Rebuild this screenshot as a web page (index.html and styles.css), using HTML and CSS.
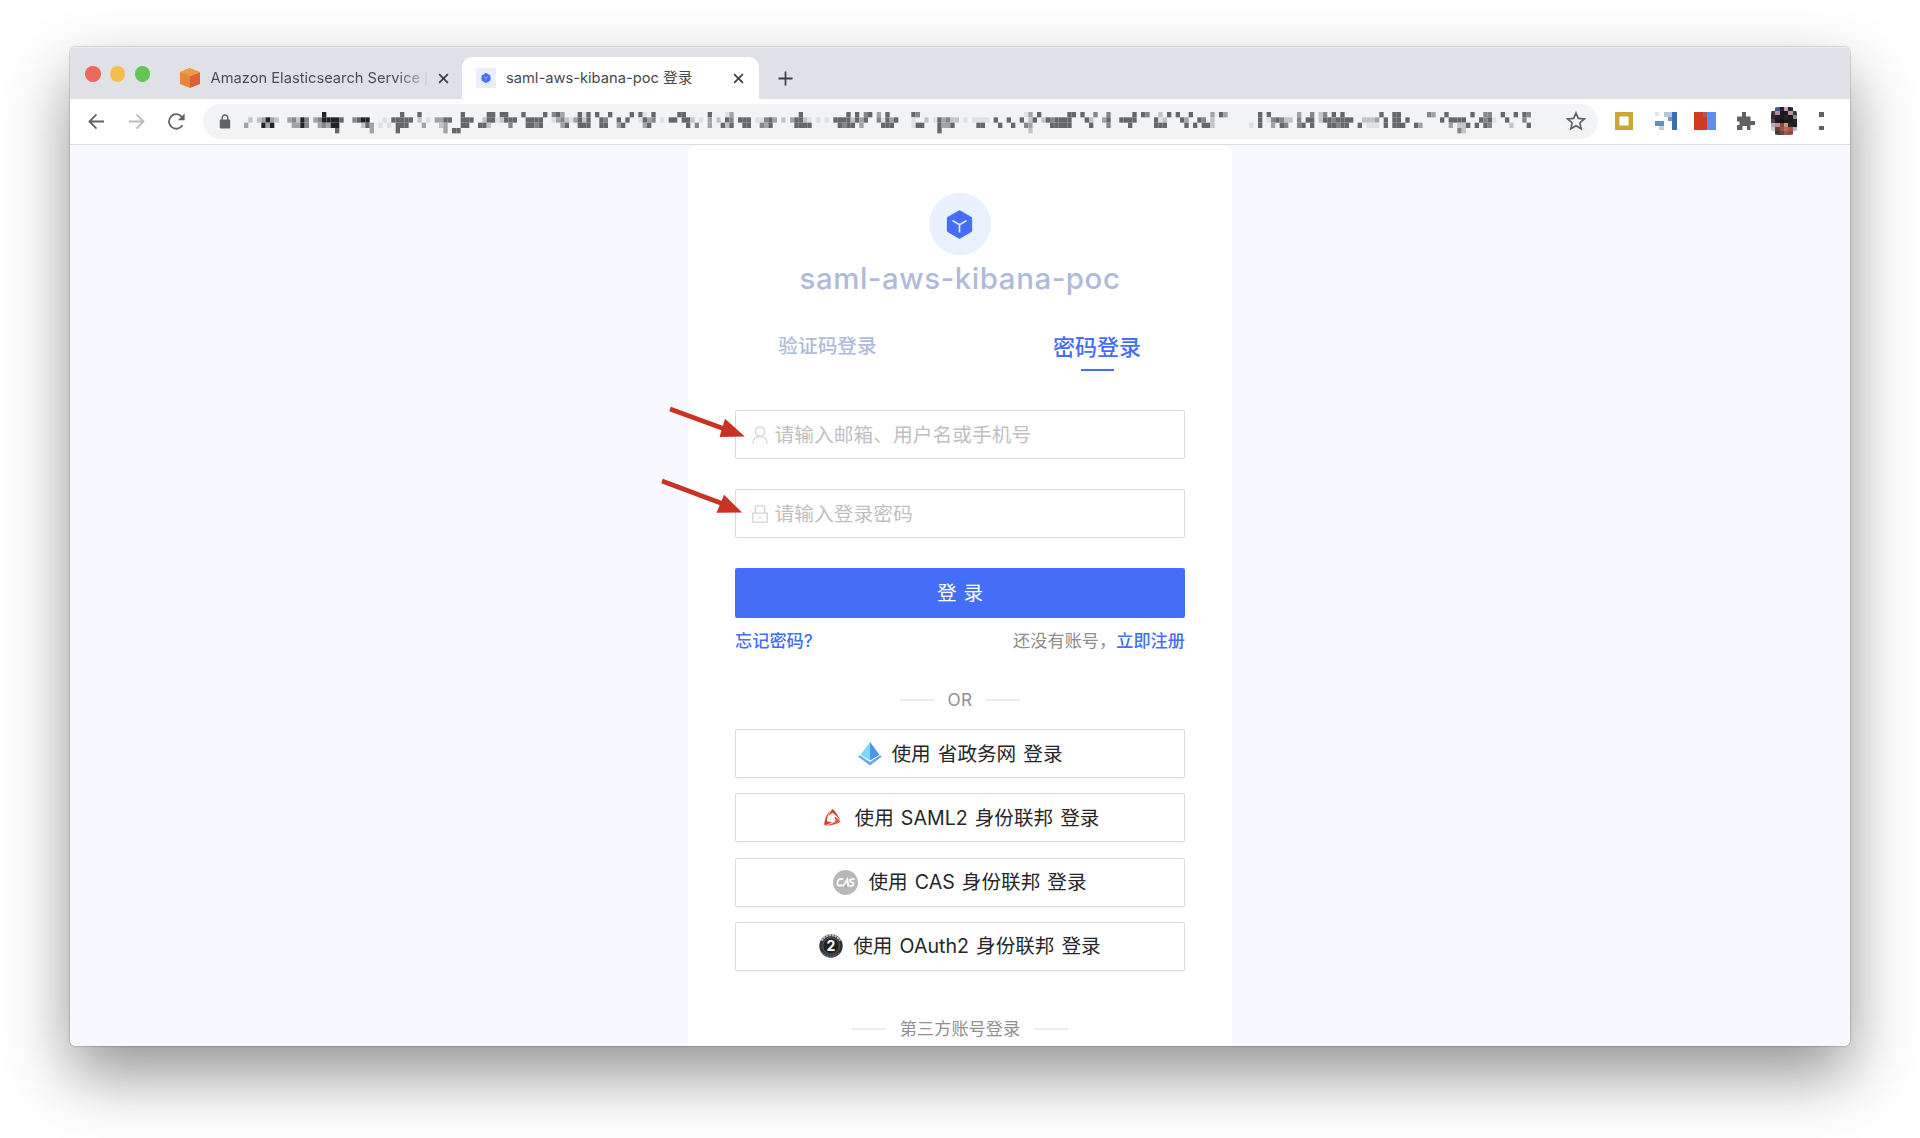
FILE: index.html
```html
<!DOCTYPE html>
<html lang="zh-CN">
<head>
<meta charset="utf-8">
<title>saml-aws-kibana-poc 登录</title>
<link rel="stylesheet" href="styles.css">
</head>
<body>
<div class="window">
  <header class="tabstrip">
    <div class="lights"><i class="red"></i><i class="yellow"></i><i class="green"></i></div>
    <div class="tab">
      <svg class="favicon" viewBox="0 0 20 20"><path d="M0 4 10 0v20L0 16z" fill="#e8873c"/><path d="M10 8l10-4v12l-10 4z" fill="#dc6330"/><path d="M0 4 10 0l10 4-10 4z" fill="#ee9a45"/></svg>
      <span class="tab-title fade">Amazon Elasticsearch Service</span>
      <span class="sliver"></span>
      <svg class="close" viewBox="0 0 12 12"><path d="M1.200 1.200l9.600 9.600M10.800 1.200l-9.600 9.600"/></svg>
    </div>
    <div class="tab active">
      <svg class="favicon" viewBox="0 0 20 20"><path d="M0 0h20v20H0z" fill="#e9effe"/><path d="M10 5.400l4 2.300v4.600l-4 2.300-4-2.300V7.700z" fill="#446ef7" stroke="#446ef7" stroke-linejoin="round"/><path d="M7.800 8.600L10 10l2.200-1.400M10 10v2.600" fill="none" stroke="#9db4fb" stroke-width=".8"/></svg>
      <span class="tab-title">saml-aws-kibana-poc 登录</span>
      <svg class="close" viewBox="0 0 12 12"><path d="M1.200 1.200l9.600 9.600M10.800 1.200l-9.600 9.600"/></svg>
    </div>
    <svg class="plus" viewBox="0 0 16 16"><path d="M8 .5v15M.5 8h15"/></svg>
  </header>

  <div class="toolbar">
    <svg class="nav" viewBox="0 0 18 18"><path d="M17 9H2M9 1.500L1.500 9 9 16.500"/></svg>
    <svg class="nav off" viewBox="0 0 18 18"><path d="M1 9h15M9 1.500L16.500 9 9 16.500"/></svg>
    <svg class="nav" viewBox="0 0 18 18"><path d="M15.300 13A7.700 7.700 0 1 1 14.800 4.200"/><path d="M17.600.6v7.200h-7.200z" fill="#5f6368" stroke="none"/></svg>
    <div class="address">
      <svg class="lock" viewBox="0 0 12 15"><path d="M3.200 6V3.800a2.800 2.800 0 0 1 5.600 0V6" fill="none" stroke="#5f6368" stroke-width="1.400"/><rect x=".8" y="5.500" width="10.400" height="9" rx="1.200" fill="#5f6368"/></svg>
      <svg class="url" id="url" viewBox="0 0 1290 22" preserveAspectRatio="none"></svg>
      <svg class="star" viewBox="0 0 18 18"><path d="M9 1.800l2.150 4.900 5.350.5-4.050 3.550 1.200 5.250L9 13.200l-4.650 2.800 1.200-5.250L1.500 7.200l5.350-.5z"/></svg>
    </div>
    <svg class="ext e1" viewBox="0 0 18 18"><path d="M2.200 2.200h13.600v13.600H2.200z" fill="#fff" stroke="#c8a737" stroke-width="4.400"/></svg>
    <svg class="ext e2" viewBox="0 0 22 18" shape-rendering="crispEdges"><path d="M0 0h4v4H0z" fill="#dfe4ef"/><path d="M0 9h9v5H0z" fill="#5f8fc4"/><path d="M4 14h5v4H4z" fill="#c5cfe2"/><path d="M9 0h9v5H9z" fill="#b7c3dc"/><path d="M13 5h5v4h-5z" fill="#6d97cb"/><path d="M17 0h5v18h-5z" fill="#3d72a8"/></svg>
    <svg class="ext e3" viewBox="0 0 22 18"><path d="M0 0h13v18H0z" fill="#d33a24"/><path d="M13 0h9v18h-9z" fill="#5a90ea"/><path d="M9 0h4v5H9z" fill="#a75a68"/></svg>
    <svg class="ext e4" viewBox="0 0 18 18"><path d="M5 4.500V0h4v4.500h4.500V9H18v4h-4.500v5H10v-4H5.500v4H0v-5h2.500V9.500H0v-5z" fill="#606164"/></svg>
    <svg class="avatar" id="avatar" viewBox="0 0 6 7" preserveAspectRatio="none" shape-rendering="crispEdges"></svg>
    <div class="dots"><i></i><i></i></div>
  </div>

  <main class="page">
    <section class="card">
      <div class="logo"><svg viewBox="0 0 28 30"><path d="M14 1.800l11.600 6.600v13.200L14 28.200 2.400 21.600V8.400z" fill="#446ef7" stroke="#446ef7" stroke-width="3" stroke-linejoin="round"/><path d="M7.200 11.200l6.800 4 6.800-4M14 15.200v7.600" fill="none" stroke="#e3ebff" stroke-width="1.700" stroke-linecap="round"/></svg></div>
      <h1>saml-aws-kibana-poc</h1>
      <nav class="modes"><a>验证码登录</a><a class="on">密码登录</a></nav>
      <label class="field">
        <svg viewBox="0 0 16 18"><circle cx="8" cy="5.600" r="4.700"/><path d="M.7 17.700C.9 13 4 10.400 8 10.400s7.100 2.600 7.300 7.300"/></svg>
        <input placeholder="请输入邮箱、用户名或手机号">
      </label>
      <label class="field">
        <svg viewBox="0 0 16 18"><path d="M.7 8.200h14.600v9H.7zM3.300 8.200V2.800Q3.300.8 5.300.8h5.400q2 0 2 2v5.400M8 11.500v2.500"/></svg>
        <input placeholder="请输入登录密码">
      </label>
      <button class="submit">登 录</button>
      <div class="links"><a>忘记密码?</a><span>还没有账号，<a>立即注册</a></span></div>
      <div class="divider or"><span>OR</span></div>
      <div class="providers">
        <button class="provider"><svg class="p1" viewBox="0 0 24 24"><path d="M12 0L2.500 12.800 12 18.500z" fill="#7cd8fb"/><path d="M12 0l9.500 12.800L12 18.500z" fill="#4f96e4"/><path d="M0 14.600l1.800-1.300L12 20l10.200-6.700 1.800 1.300L12 23.500z" fill="#66a8f2"/></svg><span>使用 省政务网 登录</span></button>
        <button class="provider"><svg class="p2" viewBox="0 0 17 17" fill="#d8412f"><path d="M8.600 0c3 2.500 6.300 7.500 7.900 12-1.600-2.600-5-6.300-8.200-8.200L4.600 7.200C5.500 4 7 1.500 8.600 0z"/><path d="M16.500 13c-4 2.500-10 3.700-15.700 3.600 3.600-.8 8-2.200 10.700-4.700l-1-4.600c2.800 1.500 5 3.500 6 5.700z" opacity=".85"/><path d="M.4 16.200C0 11.500 2.200 6 6.300 1.200 4.300 5 2.700 9.500 3 12.600l5 .5C5.700 15 2.700 16.300.4 16.200z"/></svg><span>使用 SAML2 身份联邦 登录</span></button>
        <button class="provider"><svg class="p3" viewBox="0 0 24 24"><circle cx="12" cy="12" r="12" fill="#b7b8b9"/><path d="M9.800 8.800H7.200Q5 9 4.300 11.500T5.500 15h2.200l1-1M9.600 16l4.200-7 .9 7M20.800 8.800h-2.500q-1.800 0-1.900 1.500t2 1.500q1.700.3 1.300 1.800T17.500 15.200h-1.800" fill="none" stroke="#fff" stroke-width="1.700"/><path d="M11 15.500h2" stroke="#76b26c" stroke-width="1.500"/></svg><span>使用 CAS 身份联邦 登录</span></button>
        <button class="provider"><svg class="p4" viewBox="0 0 24 24"><circle cx="12" cy="12" r="11.700" fill="#303133"/><path d="M2.500 6.500a11 11 0 0 1 19 0" fill="none" stroke="#c2c2c2" stroke-width="2.600" stroke-dasharray="2.200 .8"/><path d="M3 18a11 11 0 0 0 18 0" fill="none" stroke="#6c6c6c" stroke-width="1.500" stroke-dasharray="2 1"/><circle cx="12" cy="12" r="8.300" fill="#202123" stroke="#77797c" stroke-width=".7"/><text x="12" y="17" text-anchor="middle">2</text></svg><span>使用 OAuth2 身份联邦 登录</span></button>
      </div>
      <div class="divider third"><span>第三方账号登录</span></div>
    </section>
  </main>
</div>
<svg class="arrows" viewBox="0 0 100 120">
  <g stroke="#c73423" stroke-width="4.600" fill="none"><path d="M20 9l56 20.500M12 81l60 22.500"/></g>
  <g fill="#c73423"><path d="M94.800 36.500L75 18.800 69.500 37z"/><path d="M92.200 112.500L74 94.800 66.500 112.800z"/></g>
</svg>
<script src="mosaic.js"></script>
</body>
</html>
```
FILE: styles.css
```css
* { box-sizing: border-box; }
body {
  margin: 0;
  height: 1138px;
  padding: 47px 70px 0;
  background: #fff;
  overflow: hidden;
  font-family: Inter, "Noto Sans CJK SC", sans-serif;
}
svg { display: block; flex: none; }
.window {
  width: 1780px;
  height: 999px;
  display: flex;
  flex-direction: column;
  overflow: hidden;
  border-radius: 6px;
  background: #fff;
  box-shadow: 0 0 1px 1px rgba(0,0,0,.14), 0 29px 64px rgba(0,0,0,.42);
}

/* tab strip */
.tabstrip {
  height: 52px;
  flex: none;
  display: flex;
  background: #dfe1e6;
  border-top: 1px solid #eceef0;
}
.lights { width: 94px; padding: 18px 0 0 15px; display: flex; gap: 9.300px; }
.lights i { width: 15.500px; height: 15.500px; border-radius: 50%; }
.red { background: #ec695f; }
.yellow { background: #f4be4f; }
.green { background: #62c655; }
.tab {
  width: 298px;
  display: flex;
  align-items: center;
  padding: 9px 13.500px 0 16px;
  color: #46494d;
}
.tab .favicon { width: 20px; height: 20px; }
.tab-title {
  margin-left: 10px;
  white-space: nowrap;
  font-size: 14.700px;
  line-height: 22px;
}
.tab-title.fade {
  margin-left: 10.500px;
  letter-spacing: 0;
  color: transparent;
  background: linear-gradient(90deg, #46494d 88%, #a5a7ab 100%);
  -webkit-background-clip: text;
  background-clip: text;
}
.sliver { width: 1.500px; height: 13px; margin-left: 5px; background: #d0d2d6; }
.close { width: 11px; height: 11px; margin-left: auto; }
.close path, .plus path { stroke: #3e4043; stroke-width: 1.900; fill: none; }
.tab.active {
  width: 297px;
  height: 42px;
  margin-top: 9px;
  padding: 0 15px 0 14px;
  background: #fff;
  border-radius: 10px 10px 0 0;
}
.plus { width: 15px; height: 15px; margin: 22.500px 0 0 19px; }

/* toolbar */
.toolbar {
  height: 46px;
  flex: none;
  display: flex;
  align-items: center;
  padding: 0 0 1px 18px;
  border-bottom: 1px solid #dadce0;
}
.nav { width: 17px; height: 17px; margin-right: 23px; fill: none; stroke: #5f6368; stroke-width: 1.900; }
.nav.off { stroke: #b9bbbe; }
.nav:nth-of-type(3) { margin-right: 18px; }
.address {
  width: 1395px;
  height: 35px;
  display: flex;
  align-items: center;
  border-radius: 18px;
  background: #f1f3f4;
}
.lock { width: 12px; height: 15px; margin: 0 13px 0 16px; }
.url { width: 1290px; height: 22px; margin: 3px 32px 0 0; }
.star { width: 20px; height: 20px; fill: none; stroke: #5f6368; stroke-width: 1.500; }
.ext { height: 18px; }
.e1 { width: 18px; margin-left: 17px; }
.e2 { width: 22px; margin-left: 22px; }
.e3 { width: 22px; margin-left: 16.500px; }
.e4 { width: 18px; margin-left: 21.500px; }
.avatar { width: 26px; height: 28px; margin-left: 16px; border-radius: 7px; }
.dots { width: 4.500px; height: 18px; margin-left: 22px; display: flex; flex-direction: column; justify-content: space-between; }
.dots i { height: 4.500px; background: #606164; }

/* login page */
.page { flex: 1; display: flex; justify-content: center; background: #f8f9ff; overflow: hidden; }
.card {
  width: 544px;
  flex: none;
  height: 940px;
  padding: 48px 47px 0;
  background: #fff;
  border-radius: 11px 11px 0 0;
}
.logo {
  width: 62px;
  height: 62px;
  margin: 0 auto;
  display: grid;
  place-items: center;
  border-radius: 50%;
  background: #e9f0fe;
}
.logo svg { width: 27px; height: 29px; margin-right: 1px; }
h1 {
  margin: 5px 0 0;
  text-align: center;
  font-size: 29.400px;
  font-weight: 500;
  letter-spacing: .58px;
  line-height: 38px;
  color: #afbbd9;
}
.modes { display: flex; margin-top: 25px; height: 47px; }
.modes a {
  width: 185px;
  text-align: center;
  font-size: 19.700px;
  line-height: 46px;
  color: #afbbd9;
  font-weight: 500;
}
.modes a.on {
  width: 90px;
  margin-left: 132px;
  font-size: 22px;
  line-height: 48px;
  color: #446ef7;
}
.modes a.on::after { content: ""; display: block; width: 33px; height: 2.500px; margin: -2.500px auto 0; background: #446ef7; }
.field {
  height: 49px;
  margin-top: 30px;
  display: flex;
  align-items: center;
  padding-left: 15.500px;
  border: 1px solid #d9d9d9;
  border-radius: 2px;
}
.modes + .field { margin-top: 40px; }
.field svg { width: 16px; height: 18px; fill: none; stroke: #d2d2d2; stroke-width: 1.200; }
.field input {
  flex: 1;
  margin-left: 7px;
  padding: 0;
  border: 0;
  outline: 0;
  background: none;
  font: 19.750px/30px Inter, "Noto Sans CJK SC", sans-serif;
}
.field input::placeholder { color: #bfbfbf; opacity: 1; }
.submit {
  display: block;
  width: 100%;
  height: 50px;
  margin-top: 30px;
  padding: 0;
  border: 0;
  border-radius: 2px;
  background: #446ef7;
  color: #fff;
  font: 19.600px/30px Inter, "Noto Sans CJK SC", sans-serif;
  word-spacing: 1.500px;
}
.links {
  display: flex;
  justify-content: space-between;
  margin-top: 10px;
  font-size: 17.200px;
  line-height: 26px;
  color: #8c8c8c;
}
.links a { color: #446ef7; font-weight: 500; }
.divider {
  display: flex;
  justify-content: center;
  align-items: center;
  gap: 14px;
  font-size: 17.200px;
  line-height: 26px;
  color: #909090;
}
.divider::before, .divider::after { content: ""; width: 34px; height: 1.500px; background: #ececec; }
.or { margin-top: 33px; }
.or span { letter-spacing: .3px; }
.third { margin-top: 45px; }
.providers { display: grid; grid-auto-rows: 49.200px; gap: 15.100px; margin-top: 16px; }
.provider {
  display: flex;
  justify-content: center;
  align-items: center;
  padding: 0;
  border: 1px solid #d9d9d9;
  border-radius: 2px;
  background: #fff;
  box-shadow: 0 2px 1px rgba(0,0,0,.02);
  color: #262626;
  font: 19.600px/30px Inter, "Noto Sans CJK SC", sans-serif;
  word-spacing: 1.600px;
}
.p1, .p4 { width: 24px; height: 24px; margin-right: 10px; }
.p2 { width: 17px; height: 17px; margin: 0 14px 0 3px; }
.p3 { width: 25px; height: 25px; margin-right: 10px; }
.p4 text { font: 700 14px Inter, sans-serif; fill: #fff; }

/* annotation arrows over the page */
.arrows { position: absolute; left: 650px; top: 400px; width: 100px; height: 120px; }
```
FILE: mosaic.js
```js
const NS = 'http://www.w3.org/2000/svg';
function cell(svg, x, y, w, h, fill) {
  const r = document.createElementNS(NS, 'rect');
  r.setAttribute('x', x); r.setAttribute('y', y);
  r.setAttribute('width', w); r.setAttribute('height', h);
  r.setAttribute('fill', fill);
  svg.appendChild(r);
}
// Redacted address: column index, then the shade of its four cells from top to bottom.
const shades = ['', '#dfe0e1', '#c3c4c5', '#a2a3a5', '#858688', '#66676a', '#222326'];
const columns = `0:0030 1:0200 3:0200 4:0360 5:0630 6:0360 7:0200 10:0300 11:0430 12:0230 13:0660 14:0440
16:0300 17:0430 18:6640 19:0630 20:0660 21:0665 22:0500 25:0400 26:0500 27:0620 28:0650 29:0033
31:0010 32:0100 33:0010 34:0500 35:0555 36:5550 37:0550 38:0500 40:5200 41:0030 42:0100
44:0300 45:0320 46:0533 47:0500 48:0005 49:0005 50:5550 51:0550 52:0500
54:0050 55:0250 56:5520 57:5500 58:0100 59:5200 60:5500 61:0540 62:0500
64:5000 65:0550 66:0550 67:0540 68:0550 69:5000 71:4100 72:5300 73:3430 74:0250 75:0100
76:0300 77:5550 78:1250 79:5550 81:5000 82:0550 83:0450 84:5000 86:0530 87:0050 88:0500 89:5000
91:5100 92:1530 93:0350 94:5400 96:0100 98:0500 99:0500 100:5000 101:5500 102:0550 103:0200 104:0040 105:0100
107:5330 109:0200 110:0050 111:1520 112:3450 114:0500 115:0550 116:0550 118:0100 119:0140 120:0430 121:0550 122:0300
124:0200 126:0300 127:0550 128:5550 129:0250 130:0150 132:0100 134:0100 136:0500 137:0550 138:0540 139:5550 140:0250
141:5500 142:0330 143:4500 144:5000 146:3400 147:0150 148:5550 149:0350 150:0500
154:5110 155:4050 156:0050 157:0200 159:0100 160:0555 161:0330 162:0430 163:0250 164:0200 166:0100 168:0100
169:0150 170:0150 171:0100 173:0500 174:0050 176:0500 177:0050 179:0500 180:1040 181:3232 182:0500 183:5000
184:0200 185:0500 186:0450 187:0550 188:0550 189:0550 190:5550 191:5000 193:5000 194:0500 195:0250 196:4000
198:0300 199:4540 202:0500 203:0500 204:0550 205:5500 207:5000 208:4000 210:0550 211:2150 212:0250 213:5000
215:5000 216:0500 217:0350 218:5000 219:0050 220:0500 221:0450 222:0050 223:3220 225:5000 226:3000
232:0010 234:5550 236:5100 237:0430 238:0500 239:0450 240:0240 241:0200 243:3440 244:0050 245:0500 246:4550
248:2200 249:4500 250:0550 251:5450 252:0540 253:5550 254:0550 255:0500 257:0050 258:0200 259:0210 260:0210
261:0310 262:5000 263:0550 265:5550 266:5550 267:0050 268:0500 270:0050 271:0030 273:4000 274:3000
276:0500 277:5000 278:0530 279:0500 280:0524 281:0522 282:0050 283:5000 284:0050 285:0500 286:4450 287:4540 288:0100
290:5000 291:0500 292:0020 293:5000 295:5400 296:4050`;
const url = document.getElementById('url');
for (const item of columns.split(/\s+/)) {
  const [col, values] = item.split(':');
  [...values].forEach((v, row) => {
    if (v !== '0') cell(url, col * 4.3333, row * 5.3333, 4.3333, 5.3333, shades[v]);
  });
}
const face = [
  '#ffffff #4a5485 #24222a #c99bc0 #23232b #ffffff',
  '#3b3537 #b48aa8 #191a1c #1c1c20 #c08fae #33363a',
  '#342c30 #222226 #1b1c1e #26262a #1a1b1d #8a8b90',
  '#5d3f44 #17181a #121314 #1d1b1d #1a1a1c #232427',
  '#a9b0c6 #c08a9c #7d4a45 #e58a72 #2b2626 #1d1e20',
  '#c9cce0 #6b4038 #8e5a4c #c46a5b #a65a4f #b5b3b5',
  '#ffffff #4e3a35 #69483f #a05650 #8e4a46 #ffffff'
];
const avatar = document.getElementById('avatar');
face.forEach((line, y) => line.split(' ').forEach((c, x) => cell(avatar, x, y, 1, 1, c)));
```
